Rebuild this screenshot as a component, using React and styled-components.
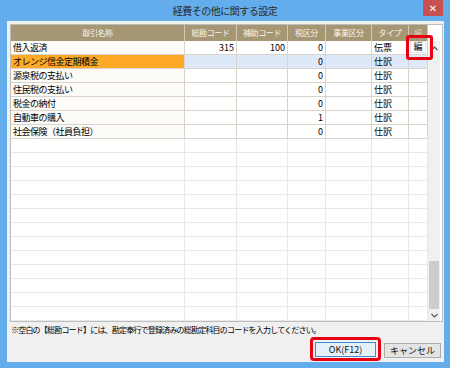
import React from 'react';
import styled, { createGlobalStyle } from 'styled-components';

const GlobalStyle = createGlobalStyle`
  html, body {
    margin: 0;
    padding: 0;
  }
  body {
    font-family: "Noto Sans CJK JP", "Noto Sans", sans-serif;
    background: #ffffff;
  }
  * {
    box-sizing: border-box;
  }
`;

const Window = styled.div`
  width: 450px;
  height: 368px;
  background: #63adec;
  display: flex;
  flex-direction: column;
`;

const TitleBar = styled.div`
  height: 21px;
  display: grid;
  grid-template-columns: 27px 1fr 27px;
  align-items: start;
`;

const Title = styled.div`
  grid-column: 2;
  text-align: center;
  font-size: 10px;
  letter-spacing: -0.5px;
  line-height: 21px;
  color: #2a2a2a;
`;

const CloseButton = styled.div`
  width: 20px;
  height: 16px;
  background: #c75050;
  color: #ffffff;
  display: flex;
  align-items: center;
  justify-content: center;
  font-family: "DejaVu Sans", sans-serif;
  font-size: 10px;
  font-weight: bold;
`;

const Client = styled.div`
  flex: 1;
  margin: 0 6px 6px 7px;
  padding: 3px 1px 0 3px;
  background: #f0f0f0;
  display: flex;
  flex-direction: column;
`;

const GridBox = styled.div`
  height: 298px;
  border: 1px solid #bdbdbd;
  background: #ffffff;
  display: flex;
`;

const Table = styled.div`
  display: grid;
  grid-template-columns: 174px 52px 51px 38px 46px 37px 19px;
  grid-template-rows: 16px;
  grid-auto-rows: 14px;
  width: 417px;
`;

const HeadCell = styled.div`
  background: #a69774;
  color: #f8f4ea;
  font-size: 8px;
  letter-spacing: -0.4px;
  line-height: 16px;
  text-align: center;
  white-space: nowrap;
  overflow: hidden;
  border-right: 1px solid #d3c9b2;
  ${p => p.$faint && 'color: #d9cfb8;'}
`;

const Cell = styled.div`
  position: relative;
  font-size: 9px;
  letter-spacing: ${p => (p.$name ? '-0.5px' : '0')};
  line-height: 13px;
  padding: 0 2px;
  white-space: nowrap;
  color: #000000;
  text-align: ${p => (p.$right ? 'right' : 'left')};
  border-right: 1px solid ${p => (p.$empty ? '#e9e9e9' : '#d8d4cc')};
  border-bottom: 1px solid ${p => (p.$empty ? '#e9e9e9' : '#d8d4cc')};
  background: ${p => p.$bg || (p.$name ? '#fcfbf8' : '#ffffff')};
`;

const EditButton = styled.div`
  height: 12px;
  margin: 0 -1px;
  background: #ffffff;
  border: 1px solid #e0e0e0;
  font-size: 9px;
  line-height: 10px;
  text-align: center;
`;

const Highlight = styled.div`
  position: absolute;
  z-index: 2;
  left: -3px;
  top: -6px;
  width: 27px;
  height: 25px;
  border: 3px solid #e60012;
  border-radius: 3px;
  pointer-events: none;
`;

const Scrollbar = styled.div`
  width: 12px;
  display: flex;
  flex-direction: column;
  background: #f0f0f0;
`;

const ScrollHead = styled.div`
  height: 16px;
  background: #ffffff;
`;

const ScrollArrow = styled.div`
  height: ${p => p.$h}px;
  display: flex;
  align-items: center;
  justify-content: center;
  color: #606060;
`;

const ScrollTrack = styled.div`
  flex: 1;
  display: flex;
  flex-direction: column;
  justify-content: flex-end;
  padding: 0 1px;
`;

const Thumb = styled.div`
  height: 48px;
  background: #cdcdcd;
`;

const Filler = styled.div`
  flex: 1;
  background: #ffffff;
`;

const Note = styled.div`
  font-size: 8px;
  letter-spacing: -0.8px;
  line-height: 15px;
  padding-left: 1px;
  color: #000000;
  white-space: nowrap;
`;

const ButtonRow = styled.div`
  display: flex;
  justify-content: flex-end;
  align-items: center;
  gap: 3px;
  padding-right: 2px;
`;

const Mark = styled.div`
  display: flex;
  padding: 2px 2px 1px;
  border: 3px solid #e60012;
  border-radius: 4px;
`;

const Button = styled.div`
  width: ${p => p.$w}px;
  height: 15px;
  font-size: 9px;
  line-height: 13px;
  text-align: center;
  color: #111111;
  border: 1px solid ${p => (p.$primary ? '#3c8ad8' : '#adadad')};
  background: ${p => (p.$primary ? '#e6f0fa' : '#e4e4e4')};
  ${p => !p.$primary && 'margin-top: 2px;'}
`;

const Chevron = ({ up }) => (
  <svg width="7" height="5" viewBox="0 0 7 5">
    <path
      d={up ? 'M0.5 4 L3.5 1 L6.5 4' : 'M0.5 1 L3.5 4 L6.5 1'}
      fill="none"
      stroke="#555"
      strokeWidth="1.2"
    />
  </svg>
);

const headers = ['取引名称', '総勘コード', '補助コード', '税区分', '事業区分', 'タイプ', '編'];

const rows = [
  { name: '借入返済', code: '315', sub: '100', tax: '0', type: '伝票', edit: true },
  { name: 'オレンジ信金定期積金', code: '', sub: '', tax: '0', type: '仕訳', selected: true },
  { name: '源泉税の支払い', code: '', sub: '', tax: '0', type: '仕訳' },
  { name: '住民税の支払い', code: '', sub: '', tax: '0', type: '仕訳' },
  { name: '税金の納付', code: '', sub: '', tax: '0', type: '仕訳' },
  { name: '自動車の購入', code: '', sub: '', tax: '1', type: '仕訳' },
  { name: '社会保険（社員負担）', code: '', sub: '', tax: '0', type: '仕訳' },
];

const EMPTY_ROWS = 13;

export default function App() {
  return (
    <>
      <GlobalStyle />
      <Window>
        <TitleBar>
          <Title>経費その他に関する設定</Title>
          <CloseButton>✕</CloseButton>
        </TitleBar>
        <Client>
          <GridBox>
            <Table>
              {headers.map((h, i) => (
                <HeadCell key={h} $faint={i === 6}>{h}</HeadCell>
              ))}
              {rows.map(r => {
                const sel = r.selected ? '#dde9f8' : undefined;
                return (
                  <React.Fragment key={r.name}>
                    <Cell $name $bg={r.selected ? '#ffa928' : undefined}>{r.name}</Cell>
                    <Cell $right $bg={sel}>{r.code}</Cell>
                    <Cell $right $bg={sel}>{r.sub}</Cell>
                    <Cell $right $bg={sel}>{r.tax}</Cell>
                    <Cell $bg={sel} />
                    <Cell $bg={sel}>{r.type}</Cell>
                    <Cell $bg={sel}>
                      {r.edit && (
                        <>
                          <EditButton>編</EditButton>
                          <Highlight />
                        </>
                      )}
                    </Cell>
                  </React.Fragment>
                );
              })}
              {Array.from({ length: EMPTY_ROWS * 7 }).map((_, i) => (
                <Cell key={i} $empty $bg="#ffffff" />
              ))}
            </Table>
            <Scrollbar>
              <ScrollHead />
              <ScrollArrow $h={14}><Chevron up /></ScrollArrow>
              <ScrollTrack>
                <Thumb />
              </ScrollTrack>
              <ScrollArrow $h={12}><Chevron /></ScrollArrow>
            </Scrollbar>
            <Filler />
          </GridBox>
          <Note>※空白の【総勘コード】には、勘定奉行で登録済みの総勘定科目のコードを入力してください。</Note>
          <ButtonRow>
            <Mark>
              <Button $primary $w={61}>OK(F12)</Button>
            </Mark>
            <Button $w={57}>キャンセル</Button>
          </ButtonRow>
        </Client>
      </Window>
    </>
  );
}
